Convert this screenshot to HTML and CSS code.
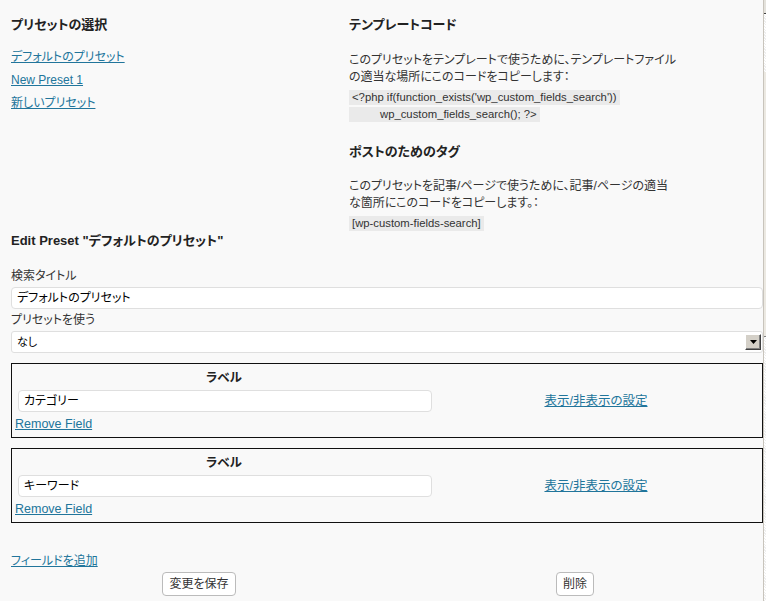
FILE: index.html
```html
<!DOCTYPE html>
<html lang="ja">
<head>
<meta charset="utf-8">
<title>プリセットの編集</title>
<link rel="stylesheet" href="styles.css">
</head>
<body>
<div class="page">
  <div class="main">
    <div class="top">
      <div class="presets">
        <h3>プリセットの選択</h3>
        <ul class="preset-list">
          <li><a href="#">デフォルトのプリセット</a></li>
          <li><a href="#">New Preset 1</a></li>
          <li><a href="#">新しいプリセット</a></li>
        </ul>
      </div>
      <div class="codes">
        <h3>テンプレートコード</h3>
        <p>このプリセットをテンプレートで使うために、テンプレートファイルの適当な場所にこのコードをコピーします：</p>
        <code class="code">&lt;?php if(function_exists('wp_custom_fields_search'))</code>
        <code class="code code-indent">wp_custom_fields_search(); ?&gt;</code>
        <h3 class="second">ポストのためのタグ</h3>
        <p>このプリセットを記事/ページで使うために、記事/ページの適当な箇所にこのコードをコピーします。：</p>
        <code class="code">[wp-custom-fields-search]</code>
      </div>
    </div>

    <h3 class="edit-title">Edit Preset "デフォルトのプリセット"</h3>

    <label class="lbl">検索タイトル</label>
    <div class="input">デフォルトのプリセット</div>
    <label class="lbl">プリセットを使う</label>
    <div class="select">
      <span class="select-text">なし</span>
      <span class="select-btn"><svg width="7" height="4" viewBox="0 0 7 4"><path d="M0 0h7L3.5 4z" fill="#000"/></svg></span>
    </div>

    <div class="field">
      <div class="field-left">
        <div class="field-head">ラベル</div>
        <div class="input field-input">カテゴリー</div>
        <a href="#" class="remove">Remove Field</a>
      </div>
      <div class="field-right"><a href="#">表示/非表示の設定</a></div>
    </div>

    <div class="field">
      <div class="field-left">
        <div class="field-head">ラベル</div>
        <div class="input field-input">キーワード</div>
        <a href="#" class="remove">Remove Field</a>
      </div>
      <div class="field-right"><a href="#">表示/非表示の設定</a></div>
    </div>

    <a href="#" class="add-field">フィールドを追加</a>
    <div class="buttons">
      <span><button>変更を保存</button></span>
      <span><button>削除</button></span>
    </div>
  </div>
  <div class="scroll">
    <div class="scroll-top"></div>
    <div class="scroll-track"></div>
    <div class="scroll-thumb"></div>
    <div class="scroll-track last"></div>
  </div>
</div>
</body>
</html>
```

FILE: styles.css
```css
*{padding:0;margin:0;box-sizing:border-box;}
html,body{height:100%;}
body{background:#f9f9f9;color:#333;font:12px/17px "Liberation Sans","Noto Sans CJK JP",sans-serif;font-feature-settings:"palt";overflow:hidden;}
a{color:#21759b;text-decoration:underline;}
h3{font-size:13px;line-height:17px;font-weight:bold;color:#222;}

.page{display:flex;height:100%;}
.main{width:763px;padding:16px 0 0 11px;}

/* 上部 プリセット一覧 / コード */
.top{display:grid;grid-template-columns:338px 327px;}
.preset-list{list-style:none;margin-top:13px;}
.preset-list li{line-height:23px;}
.codes p{margin-top:19px;}
.codes h3.second{margin-top:21px;}
.codes h3.second + p{margin-top:18px;}
.code{display:block;width:fit-content;white-space:nowrap;background:#eaeaea;font:11.3px/15px "Liberation Sans",sans-serif;color:#333;padding:0 3px;margin-top:4px;}
.code + .code{margin-top:2px;}
.code-indent{padding-left:31px;}

/* 編集フォーム */
.edit-title{margin-top:1px;}
.lbl{display:block;margin-top:19px;}
.lbl + .input + .lbl{margin-top:3px;}
.input{background:#fff;border:1px solid #dfdfdf;border-radius:4px;height:22px;line-height:20px;padding:0 5px;margin-top:2px;color:#000;}
.select{display:flex;align-items:center;justify-content:space-between;background:#fff;border:1px solid #dfdfdf;border-radius:3px;height:22px;margin-top:2px;padding:0 1px 0 5px;font-size:11px;color:#000;}
.select-btn{display:flex;align-items:center;justify-content:center;width:16px;height:16px;background:#d4d0c8;border:1px solid;border-color:#fff #404040 #404040 #fff;box-shadow:inset -1px -1px 0 #808080;}

.field{display:flex;border:1px solid #111;margin-top:10px;padding:6px 3px 4px;}
.field + .field{margin-top:10px;}
.field-left{width:418px;}
.field-head{text-align:center;font-weight:bold;font-size:12.5px;color:#222;}
.field-input{margin:3px 0 0 3px;width:414px;}
.remove{display:inline-block;margin-top:4px;font-size:12.5px;}
.field-right{flex:1;display:flex;align-items:center;justify-content:center;}
.field-right a{font-size:12.5px;}

.add-field{display:inline-block;margin-top:30px;}
.buttons{display:grid;grid-template-columns:1fr 1fr;margin-top:2px;}
.buttons span{text-align:center;}
.buttons button{font:12px/22px "Liberation Sans","Noto Sans CJK JP",sans-serif;font-feature-settings:"palt";color:#333;height:24px;padding:0 6px;background:#fff;border:1px solid #bbb;border-radius:4px;}

/* 右端のスクロールバー */
.scroll{width:3px;display:flex;flex-direction:column;border-left:1px solid #c8c4bc;}
.scroll-top{height:14px;background:#e4e2dc;border-bottom:1px solid #404040;}
.scroll-track{height:58px;background:repeating-linear-gradient(45deg,#eee 0 1px,#fff 1px 2px);}
.scroll-thumb{flex:1;max-height:428px;background:#ece9e2;border-bottom:1px solid #808080;}
.scroll-track.last{flex:1;}
```
